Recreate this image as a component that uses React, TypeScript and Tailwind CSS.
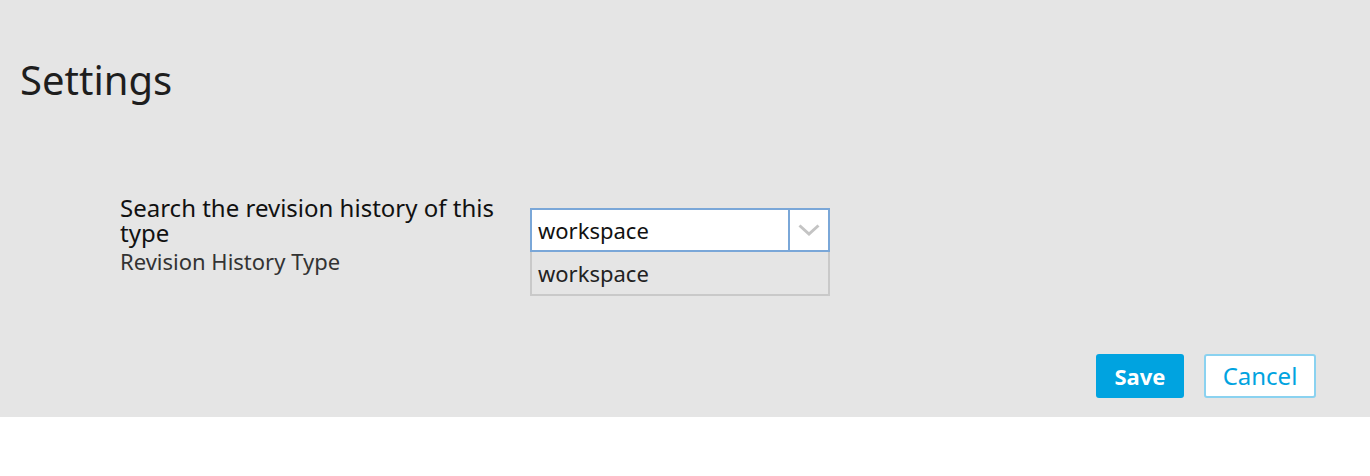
import React from "react";

const App = () => {
  return (
    <div className="w-[1370px] h-[476px] bg-white" style={{ fontFamily: '"Noto Sans", "Open Sans", sans-serif' }}>
      <div className="h-[417px] bg-[#e5e5e5] flex flex-col">
        <h1 className="pl-[20px] pt-[54px] text-[40px] leading-[52px] text-[#1e1e1e]">Settings</h1>

        <div className="flex pl-[120px] pt-[89px]">
          <div className="w-[410px]">
            <div className="text-[24px] leading-[25px] text-[#111] w-[390px]">
              Search the revision history of this type
            </div>
            <div className="text-[22px] leading-[33px] text-[#333]">Revision History Type</div>
          </div>

          <div className="w-[300px] mt-[13px]">
            <div className="flex h-[44px] border-2 border-[#7aa7d8] bg-white">
              <div className="flex-1 flex items-center pl-[6px] text-[22px] text-[#111]">workspace</div>
              <div className="w-[40px] border-l-2 border-[#7aa7d8] flex items-center justify-center">
                <svg width="22" height="12" viewBox="0 0 22 12" fill="none">
                  <path d="M1.5 1.5l9.5 8.5 9.5-8.5" stroke="#c4c4c4" strokeWidth="3" />
                </svg>
              </div>
            </div>
            <div className="h-[44px] border-2 border-t-0 border-[#c9c9c9] flex items-center pl-[6px] text-[22px] text-[#222]">
              workspace
            </div>
          </div>
        </div>

        <div className="flex justify-end gap-[20px] pr-[54px] mt-auto mb-[19px]">
          <button className="h-[44px] w-[88px] rounded-[3px] bg-[#00a3e0] text-white text-[22px] font-bold">
            Save
          </button>
          <button className="h-[44px] w-[112px] rounded-[3px] bg-white border-2 border-[#8ad2f0] text-[#00a3e0] text-[24px]">
            Cancel
          </button>
        </div>
      </div>
    </div>
  );
};

export default App;
